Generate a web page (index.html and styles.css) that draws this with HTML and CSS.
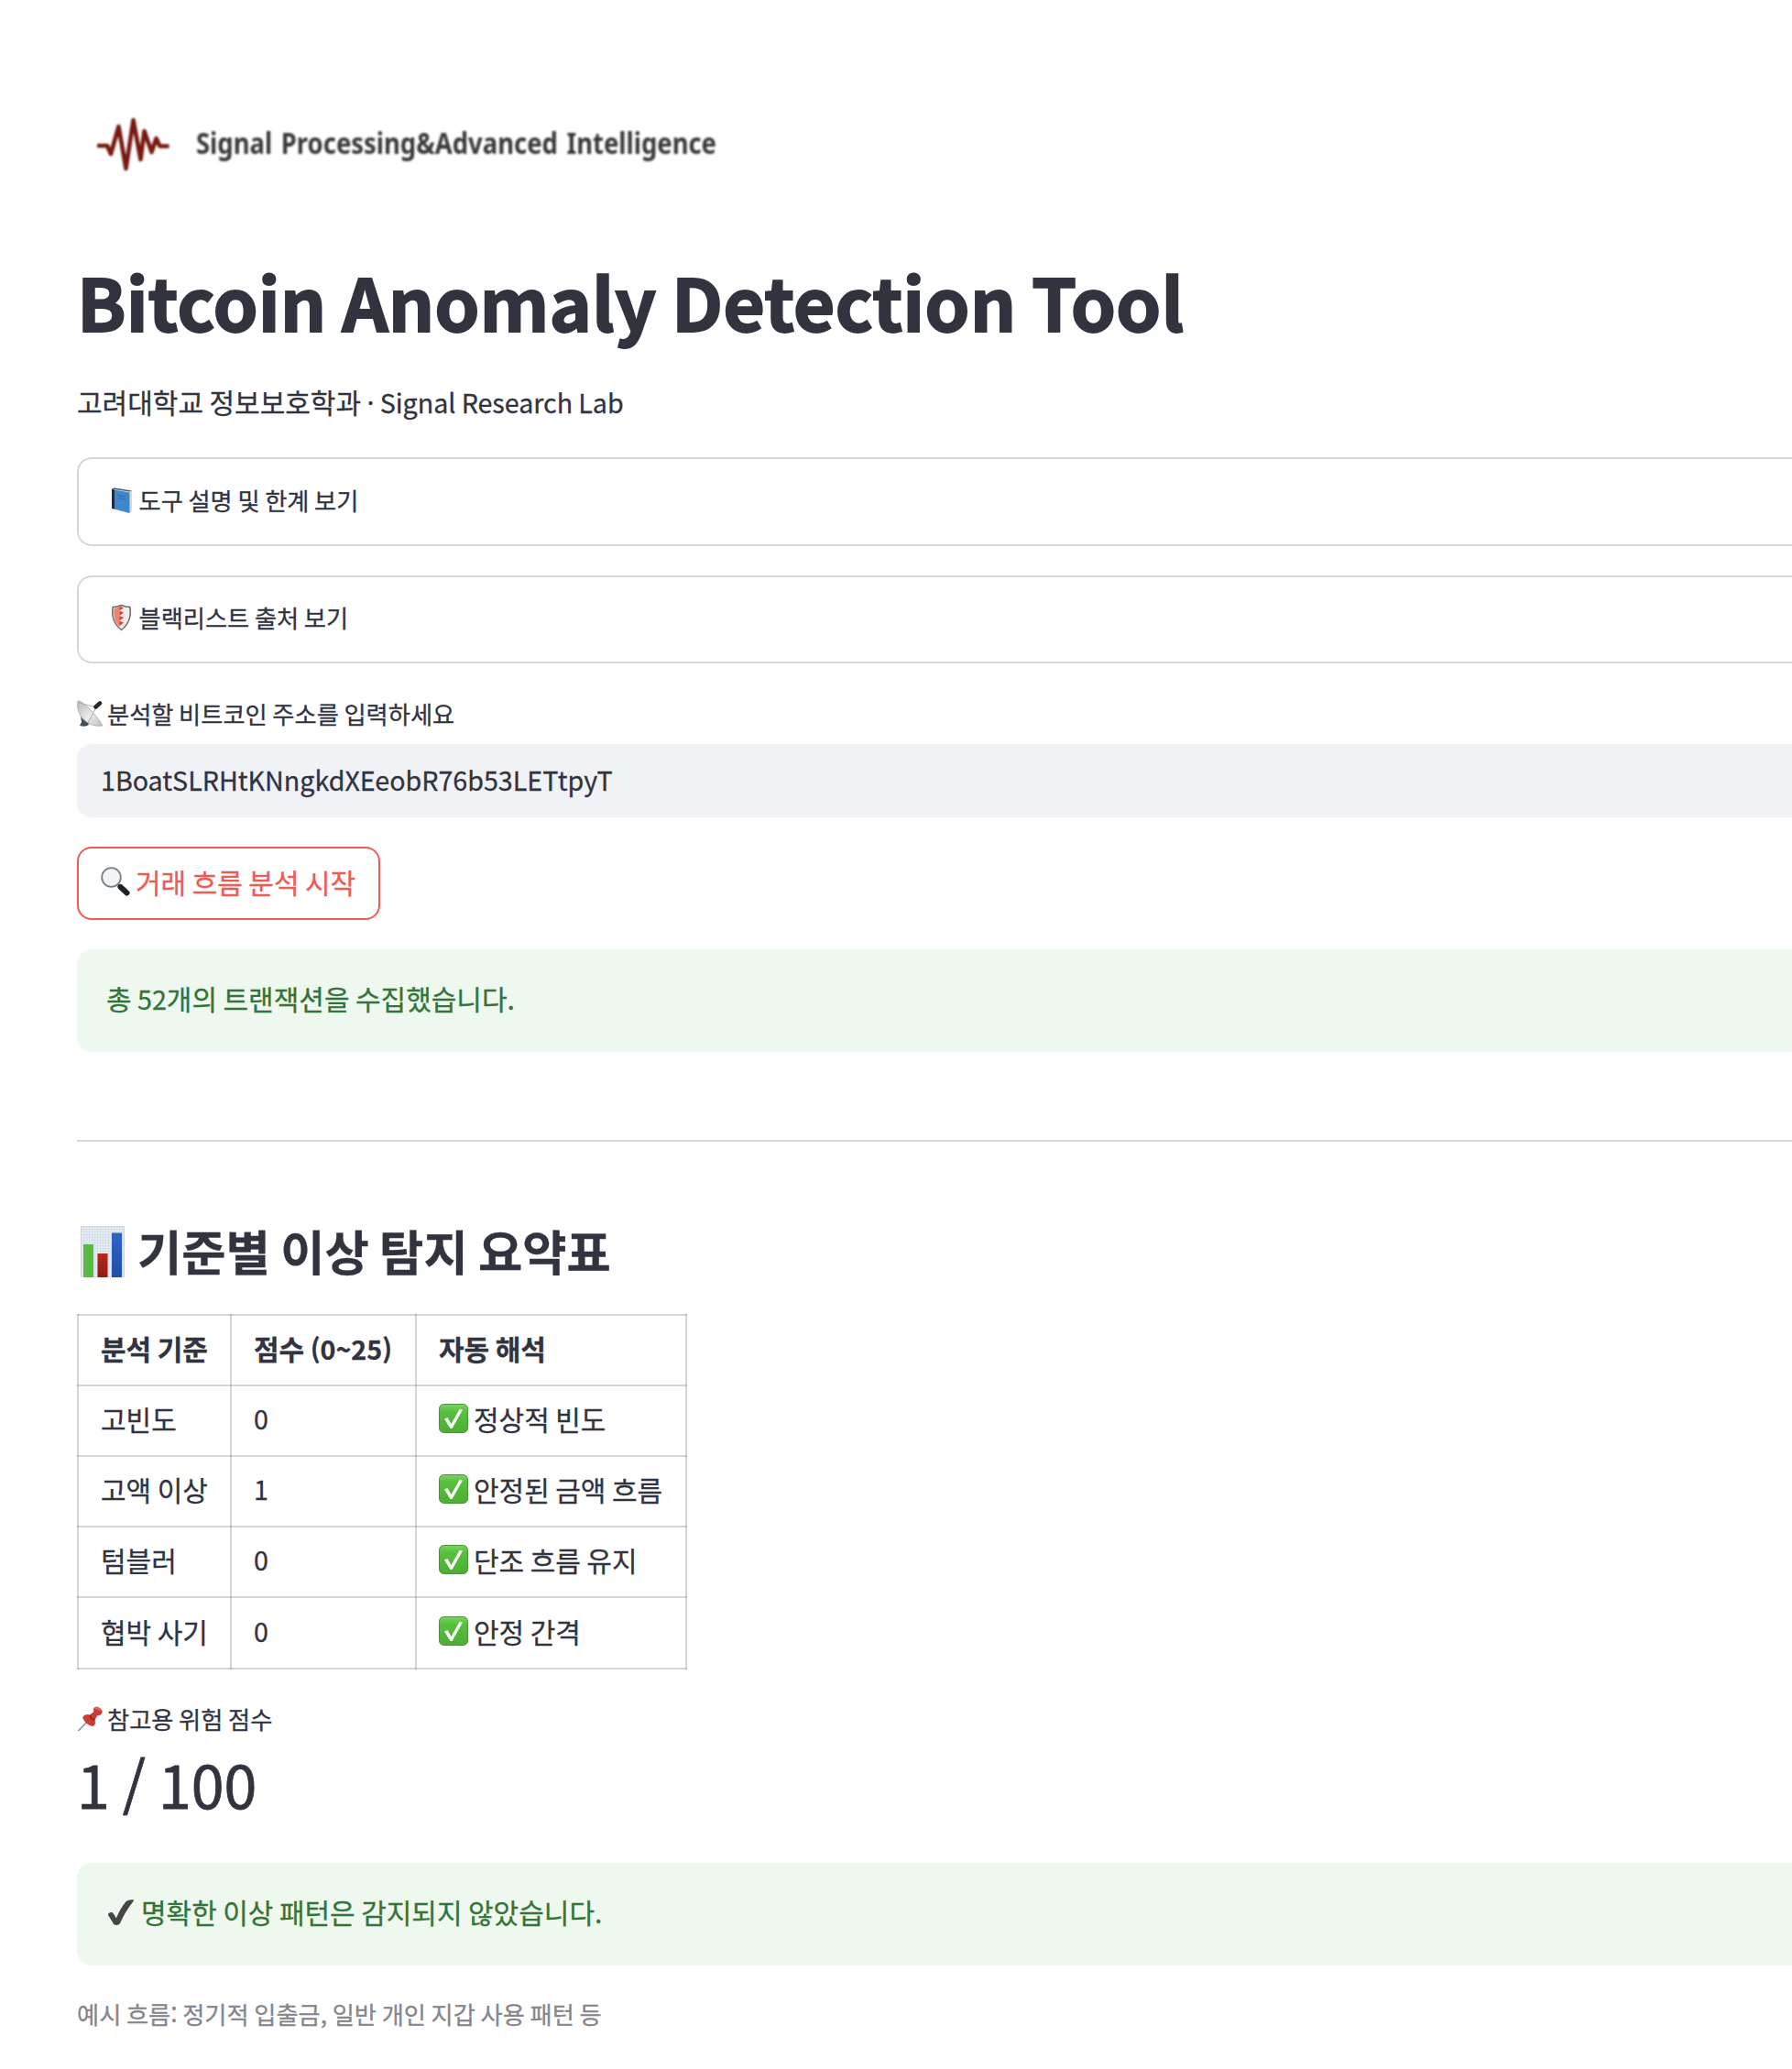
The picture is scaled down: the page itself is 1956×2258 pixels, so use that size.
FILE: index.html
```html
<!DOCTYPE html>
<html lang="ko">
<head>
<meta charset="utf-8">
<title>Bitcoin Anomaly Detection Tool</title>
<link rel="stylesheet" href="styles.css">
</head>
<body>
<svg class="defs" width="0" height="0">
  <defs>
    <linearGradient id="green" x1="0" y1="0" x2="0" y2="1"><stop offset="0" stop-color="#7fd266"/><stop offset=".25" stop-color="#57c03f"/><stop offset="1" stop-color="#4dae33"/></linearGradient>
    <linearGradient id="blue" x1="0" y1="0" x2="0" y2="1"><stop offset="0" stop-color="#2f62c9"/><stop offset="1" stop-color="#1f4fa8"/></linearGradient>
    <linearGradient id="red" x1="0" y1="0" x2="0" y2="1"><stop offset="0" stop-color="#b8281f"/><stop offset="1" stop-color="#931911"/></linearGradient>
    <linearGradient id="dish" x1="0" y1="0" x2="1" y2="1"><stop offset="0" stop-color="#b4b6b9"/><stop offset=".55" stop-color="#ededee"/><stop offset="1" stop-color="#b9bbbe"/></linearGradient>
    <pattern id="graph" width="3" height="3" patternUnits="userSpaceOnUse"><rect width="3" height="3" fill="#e4edf5"/><path d="M0 0H3M0 0V3" stroke="#c9d5df" stroke-width=".9"/></pattern>
    <symbol id="check" viewBox="0 0 32 32"><rect x=".5" y=".5" width="31" height="31" rx="5" fill="url(#green)" stroke="#45962f"/><path d="M6 16.500 9.500 15 13.500 22 22.500 6 26 6.500 14.500 27H12.500z" fill="#fff"/></symbol>
  </defs>
</svg>
<main class="page">
  <svg class="brand" width="720" height="120" viewBox="0 0 720 120">
    <path d="M22 59H33L37 68 45.500 38 53.500 84 61.500 31 69.500 74 73.500 43 81.500 66 86.500 51 90.500 59.500H100.500" fill="none" stroke="#781811" stroke-width="4.600" stroke-linejoin="round"/>
    <text x="130" y="67.500" textLength="568" lengthAdjust="spacingAndGlyphs">Signal Processing&amp;Advanced Intelligence</text>
  </svg>
  <h1>Bitcoin Anomaly Detection Tool</h1>
  <p class="subtitle">고려대학교 정보보호학과 <span class="latin">· Signal Research Lab</span></p>

  <div class="expander first">
    <svg class="ico-exp" viewBox="0 0 28 30"><path d="M3 2.500 6 1 25 4.500V27L22 29 3 24z" fill="#dcdbd0"/><path d="M5.500 3.500 22.500 6.500V29L5.500 24.500z" fill="#4187cb"/><path d="M3 2.500 6 3.500V24.500L3 24z" fill="#1a2c48"/><path d="M3 2.500 5.500 1.500 25 4.500 22.500 5.500z" fill="#2d6095"/><path d="M9.500 9.500 18 11.200M10 12.500 18 14" stroke="#2f69a4"/></svg>
    <span>도구 설명 및 한계 보기</span>
  </div>
  <div class="expander">
    <svg class="ico-exp" viewBox="0 0 28 30"><path d="M13.500 1.500Q18 3.500 22.800 3.500 25.500 19 13.500 28.500 1.500 19 4.200 3.500 9 3.500 13.500 1.500z" fill="#eeedec" stroke="#6f6a66" stroke-width="1.500"/><path d="M11.500 3Q9 4.600 5.500 4.800 4 18 11.500 25.500V23.500L16 20.500 11.500 18.500 16 15 11.500 13 16 9.500 11.500 7.500 16 4z" fill="#ee8370"/><path d="M11.500 3V7L16 4.500zM11.500 8V12.500L16 9.500zM11.500 13.500V18L16 15zM11.500 19V24L16 20.500z" fill="#d8452f"/></svg>
    <span>블랙리스트 출처 보기</span>
  </div>

  <label class="label" for="addr">
    <svg class="ico-label" viewBox="0 0 28 30"><path d="M4 17 10 20 13 27Q9 30 3 28L5 24z" fill="#454f59"/><path d="M1 1Q4 0 14 10T28 28Q15 30 5 19 -1 10 1 1z" fill="url(#dish)" stroke="#a5a8ab" stroke-width=".8"/><path d="M2 3 21 8M12 25 21 8" stroke="#a9abae" stroke-width="1"/><path d="M20.500 7.500 25 3.500" stroke="#26292c" stroke-width="4.500" stroke-linecap="round"/></svg>
    <span>분석할 비트코인 주소를 입력하세요</span>
  </label>
  <div class="input" id="addr">1BoatSLRHtKNngkdXEeobR76b53LETtpyT</div>

  <button class="button">
    <svg class="ico-btn" viewBox="0 0 32 32"><path d="M17.500 18.500 22 23" stroke="#8f979c" stroke-width="2.500"/><path d="M21.500 22 28.500 28.500" stroke="#1f2426" stroke-width="6" stroke-linecap="round"/><circle cx="11.500" cy="11.500" r="10.300" fill="#f3f4f4" stroke="#76828a" stroke-width="1.800"/></svg>
    <span>거래 흐름 분석 시작</span>
  </button>

  <div class="alert">총 <span class="latin">52</span>개의 트랜잭션을 수집했습니다.</div>
  <hr>

  <h2>
    <svg class="ico-h2" viewBox="0 0 48 56"><rect width="48" height="56" fill="url(#graph)"/><path d="M.5 56V.5H47.500V56" fill="none" stroke="#cfd3d7"/><rect x="3" y="20" width="11" height="36" fill="#57bb3d"/><rect x="18.500" y="30" width="11" height="26" fill="url(#red)"/><rect x="34" y="7.500" width="11" height="48.500" fill="url(#blue)"/></svg>
    <span>기준별 이상 탐지 요약표</span>
  </h2>

  <table>
    <colgroup><col class="c1"><col class="c2"><col class="c3"></colgroup>
    <tr><th>분석 기준</th><th>점수 <span class="latin">(0~25)</span></th><th>자동 해석</th></tr>
    <tr><td>고빈도</td><td class="latin">0</td><td><div class="verdict"><svg><use href="#check"/></svg>정상적 빈도</div></td></tr>
    <tr><td>고액 이상</td><td class="latin">1</td><td><div class="verdict"><svg><use href="#check"/></svg>안정된 금액 흐름</div></td></tr>
    <tr><td>텀블러</td><td class="latin">0</td><td><div class="verdict"><svg><use href="#check"/></svg>단조 흐름 유지</div></td></tr>
    <tr class="last"><td>협박 사기</td><td class="latin">0</td><td><div class="verdict"><svg><use href="#check"/></svg>안정 간격</div></td></tr>
  </table>

  <div class="label metric-label">
    <svg class="ico-label" viewBox="0 0 28 30"><path d="M1.500 28 12 17" stroke="#8298ac" stroke-width="1.700"/><path d="M18.500 3Q21 0 25 3T27 9Q25 12 22.500 11L19.500 16Q21 22 17 23 9 21 6 13 9 9 14 10.500L18.500 7Q17.500 5 18.500 3z" fill="#cb3c33"/><path d="M19.500 3.500Q22 1.500 25.500 6" stroke="#e36a60" stroke-width="2" fill="none"/><path d="M14 11Q15 15 19.500 16" stroke="#8f2019" stroke-width="1.500" fill="none"/></svg>
    <span>참고용 위험 점수</span>
  </div>
  <div class="metric-value">1 / 100</div>

  <div class="alert second">
    <svg class="ico-ok" viewBox="0 0 30 30"><path d="M2.200 16.500Q3.500 14.500 6.200 15 8 15.800 10.800 21.500 15 11 21.500 3.200 24 .8 29.500 1.200 30.500 1.500 29.500 3 20.500 14.500 15.500 26 14.500 28.800 11.800 29 8.800 29 7.800 27.500 5 22.500 2.500 18.800 1.700 17.500 2.200 16.500z" fill="#454545"/></svg>
    <span>명확한 이상 패턴은 감지되지 않았습니다.</span>
  </div>
  <p class="caption">예시 흐름: 정기적 입출금, 일반 개인 지갑 사용 패턴 등</p>
</main>
</body>
</html>
```
FILE: styles.css
```css
* { box-sizing: border-box; word-spacing: -0.065em; }
body {
  margin: 0;
  height: 2258px;
  overflow: hidden;
  background: #fff;
  color: #31333f;
  font-family: "Noto Sans CJK KR", sans-serif;
  font-size: 30px;
  -webkit-text-stroke: 0.3px currentColor;
}
.defs { display: block; height: 0; }
.page { display: flex; flex-direction: column; align-items: stretch; padding: 100px 0 0 84px; white-space: nowrap; }
svg { flex: none; display: block; }
.latin { font-size: 28.65px; }
.brand { overflow: visible; filter: blur(0.8px); }
.brand text { font-family: "Noto Sans", sans-serif; font-weight: 700; font-size: 31.5px; word-spacing: 3px; fill: #3a3a3a; -webkit-text-stroke: 0; }
h1 { margin: 60px 0 0; font-size: 78.8px; font-weight: 700; line-height: 96px; -webkit-text-stroke: 1.8px currentColor; }
.subtitle { height: 48px; margin: 38px 0 0; line-height: 48px; }
.expander { display: flex; align-items: center; height: 96px; margin-top: 32px; padding: 0 32px 4px 33px; border: 2px solid #d6d6d9; border-right: 0; border-radius: 16px 0 0 16px; font-size: 26.25px; line-height: 40px; gap: 4.5px; }
.expander.first { height: 97px; margin-top: 37px; }
.ico-exp { width: 28px; height: 30px; }
.label { display: flex; align-items: center; gap: 5px; margin-top: 35px; font-size: 26.25px; line-height: 40px; height: 40px; }
.ico-label { width: 28px; height: 30px; }
.input { display: flex; align-items: center; height: 80px; margin-top: 13px; padding: 0 26px 3px; border-radius: 16px 0 0 16px; background: #f0f2f6; font-size: 28.65px; }
.button { display: flex; align-items: center; align-self: flex-start; gap: 6px; width: 331px; height: 80px; margin: 32px 0 0; padding: 0 0 4px 24px; border: 2px solid #ed5b53; border-radius: 16px; background: #fff; color: #ed5b53; font: inherit; }
.ico-btn { width: 32px; height: 32px; }
.alert { height: 112px; margin-top: 32px; padding: 0 32px 5px; border-radius: 16px 0 0 16px; background: #eef8ef; color: #33743a; line-height: 107px; }
hr { width: 100%; height: 2px; margin: 96px 0 0; border: 0; background: #d6d6d9; }
h2 { display: flex; align-items: center; gap: 14px; margin: 82px 0 0; padding-left: 4px; font-size: 52.5px; font-weight: 700; line-height: 72px; height: 72px; }
.ico-h2 { width: 48px; height: 56px; margin-top: 3px; }
table { width: 664px; margin-top: 34px; border-collapse: collapse; table-layout: fixed; }
.c1 { width: 167px; }
.c2 { width: 202px; }
.c3 { width: 295px; }
th, td { height: 77px; padding: 0 0 5px 24px; border: 2px solid rgba(49, 51, 63, 0.2); text-align: left; line-height: 48px; vertical-align: middle; }
.last td { height: 78px; }
.verdict { display: flex; align-items: center; gap: 6px; }
.verdict svg { width: 32px; height: 32px; }
.metric-label { margin-top: 34px; }
.metric-value { margin-top: 10px; font-size: 64.5px; line-height: 80px; -webkit-text-stroke: 0.8px currentColor; }
.alert.second { display: flex; align-items: center; gap: 8px; margin-top: 47px; }
.ico-ok { width: 30px; height: 30px; }
.caption { margin: 33px 0 0; color: #85868c; font-size: 26.25px; line-height: 40px; }
```
